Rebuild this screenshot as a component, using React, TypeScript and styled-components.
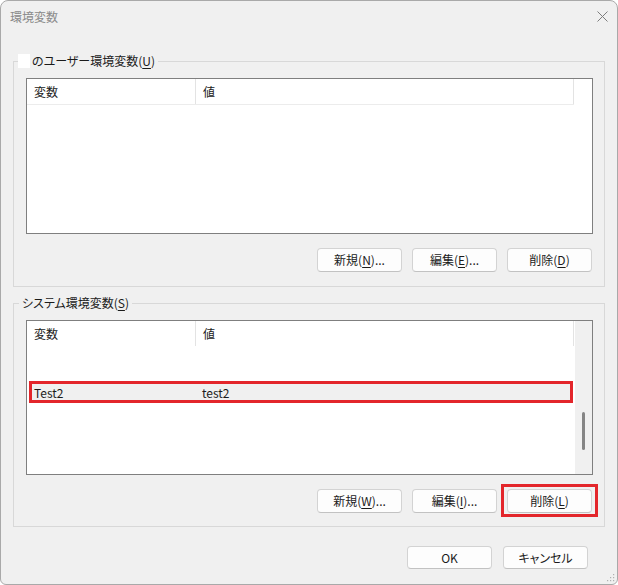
import React from 'react';
import styled, { createGlobalStyle } from 'styled-components';

const Global = createGlobalStyle`
  html, body { margin: 0; padding: 0; background: #ffffff; }
  body {
    font-family: "Noto Sans CJK JP", "Noto Sans", sans-serif;
    font-size: 12px;
    color: #1b1b1b;
    font-feature-settings: "palt";
  }
`;

const Window = styled.div`
  position: relative;
  width: 618px;
  height: 585px;
  box-sizing: border-box;
  border: 1px solid #a9a9a9;
  border-radius: 8px 8px 6px 6px;
  background: #f0f0f0;
  display: flex;
  flex-direction: column;
  overflow: hidden;
`;

const TitleBar = styled.div`
  height: 32px;
  flex: none;
  display: flex;
  align-items: center;
  justify-content: space-between;
  padding: 0 9px 0 9px;
`;

const Title = styled.span`
  font-size: 12px;
  color: #8a8a8a;
  line-height: 16px;
`;

const CloseIcon = styled.svg`
  width: 11px;
  height: 11px;
  margin-top: -2px;
`;

const Body = styled.div`
  display: flex;
  flex-direction: column;
  padding: 20px 12px 0 12px;
`;

const Group = styled.fieldset<{ $gapTop?: number }>`
  margin: ${p => p.$gapTop ?? 0}px 0 0 0;
  padding: 9px 11px ${p => (p.$gapTop ? 13 : 14)}px 12px;
  border: 1px solid #d8d8d8;
  min-width: 0;
  display: flex;
  flex-direction: column;
`;

const Legend = styled.legend`
  margin-left: -7px;
  padding: 0 3px;
  line-height: 16px;
  font-size: 12px;
  color: #1b1b1b;
  display: flex;
  align-items: center;
`;

const Redact = styled.span`
  display: inline-block;
  width: 12px;
  height: 14px;
  background: #ffffff;
  margin-left: -4px;
  margin-right: 2px;
`;

const Key = styled.span`
  text-decoration: underline;
  text-underline-offset: 2px;
`;

const ListView = styled.div<{ $h: number }>`
  height: ${p => p.$h}px;
  box-sizing: border-box;
  border: 1px solid #7f7f7f;
  background: #ffffff;
  display: flex;
`;

const Columns = styled.div`
  flex: 1;
  display: flex;
  flex-direction: column;
  min-width: 0;
`;

const Header = styled.div<{ $line: boolean }>`
  display: grid;
  grid-template-columns: 169px 378px;
  height: 26px;
  box-sizing: border-box;
  border-bottom: 1px solid ${p => (p.$line ? '#ececec' : 'transparent')};
`;

const HeaderCell = styled.div`
  display: flex;
  align-items: center;
  padding-left: 7px;
  border-right: 1px solid #e3e3e3;
  font-size: 12px;
  color: #1b1b1b;
`;

const Rows = styled.div<{ $offset: number }>`
  display: flex;
  flex-direction: column;
  padding-top: ${p => p.$offset}px;
`;

const Row = styled.div<{ $marked?: boolean }>`
  display: grid;
  grid-template-columns: 168px 1fr;
  height: 22px;
  box-sizing: border-box;
  margin: 0 1px 0 2px;
  padding-left: 2px;
  align-items: center;
  background: ${p => (p.$marked ? '#f0f0f0' : 'transparent')};
  border: ${p => (p.$marked ? '3px solid #e3262b' : 'none')};
  font-size: 12px;
  color: #1b1b1b;
`;

const Scrollbar = styled.div<{ $show: boolean }>`
  width: 17px;
  flex: none;
  margin-left: 1px;
  background: ${p => (p.$show ? '#f0f0f0' : 'transparent')};
  display: flex;
  flex-direction: column;
  align-items: center;
`;

const Thumb = styled.div<{ $top: number; $len: number }>`
  width: 3px;
  margin-top: ${p => p.$top}px;
  height: ${p => p.$len}px;
  border-radius: 2px;
  background: #858585;
`;

const ButtonRow = styled.div`
  display: flex;
  justify-content: flex-end;
  gap: 10px;
  margin-top: 14px;
  padding-right: 1px;
`;

const Button = styled.button<{ $h?: number }>`
  width: 85px;
  height: ${p => p.$h ?? 24}px;
  box-sizing: border-box;
  padding: 0;
  border: 1px solid #d3d3d3;
  border-bottom-color: #c2c2c2;
  border-radius: 4px;
  background: #fdfdfd;
  font-family: "Noto Sans CJK JP", "Noto Sans", sans-serif;
  font-feature-settings: "palt";
  font-size: 12px;
  color: #1b1b1b;
  line-height: 16px;
`;

const Marker = styled.span`
  display: inline-flex;
  border: 3px solid #e3262b;
  padding: 2px 3px 1px 3px;
  margin: -5px -6px -4px -6px;
`;

const Footer = styled.div`
  display: flex;
  justify-content: flex-end;
  gap: 11px;
  padding: 19px 17px 0 0;
`;

const Grip = styled.svg`
  position: absolute;
  right: 2px;
  bottom: 2px;
  width: 9px;
  height: 9px;
`;

type Item = { name: string; value: string; marked?: boolean };

function List({ height, headerLine, scroll, offset, items }: {
  height: number; headerLine: boolean; scroll: boolean; offset: number; items: Item[];
}) {
  return (
    <ListView $h={height}>
      <Columns>
        <Header $line={headerLine}>
          <HeaderCell>変数</HeaderCell>
          <HeaderCell>値</HeaderCell>
        </Header>
        <Rows $offset={offset}>
          {items.map(it => (
            <Row key={it.name} $marked={it.marked}>
              <span>{it.name}</span>
              <span>{it.value}</span>
            </Row>
          ))}
        </Rows>
      </Columns>
      <Scrollbar $show={scroll}>
        {scroll && <Thumb $top={91} $len={38} />}
      </Scrollbar>
    </ListView>
  );
}

export default function App() {
  return (
    <>
      <Global />
      <Window>
        <TitleBar>
          <Title>環境変数</Title>
          <CloseIcon viewBox="0 0 11 11">
            <path d="M0.5 0.5 L10.5 10.5 M10.5 0.5 L0.5 10.5" stroke="#7d7d7d" strokeWidth="1" fill="none" />
          </CloseIcon>
        </TitleBar>
        <Body>
          <Group>
            <Legend><Redact />のユーザー環境変数(<Key>U</Key>)</Legend>
            <List height={156} headerLine scroll={false} offset={0} items={[]} />
            <ButtonRow>
              <Button>新規(<Key>N</Key>)...</Button>
              <Button>編集(<Key>E</Key>)...</Button>
              <Button>削除(<Key>D</Key>)</Button>
            </ButtonRow>
          </Group>
          <Group $gapTop={8}>
            <Legend>システム環境変数(<Key>S</Key>)</Legend>
            <List height={155} headerLine={false} scroll offset={34} items={[{ name: 'Test2', value: 'test2', marked: true }]} />
            <ButtonRow>
              <Button>新規(<Key>W</Key>)...</Button>
              <Button>編集(<Key>I</Key>)...</Button>
              <Marker><Button>削除(<Key>L</Key>)</Button></Marker>
            </ButtonRow>
          </Group>
          <Footer>
            <Button $h={23}>OK</Button>
            <Button $h={23}>キャンセル</Button>
          </Footer>
        </Body>
        <Grip viewBox="0 0 9 9">
          <rect x="7" y="1" width="1.2" height="1.2" fill="#b0b0b0" />
          <rect x="4" y="4" width="1.2" height="1.2" fill="#b0b0b0" />
          <rect x="7" y="4" width="1.2" height="1.2" fill="#b0b0b0" />
          <rect x="1" y="7" width="1.2" height="1.2" fill="#b0b0b0" />
          <rect x="4" y="7" width="1.2" height="1.2" fill="#b0b0b0" />
          <rect x="7" y="7" width="1.2" height="1.2" fill="#b0b0b0" />
        </Grip>
      </Window>
    </>
  );
}
